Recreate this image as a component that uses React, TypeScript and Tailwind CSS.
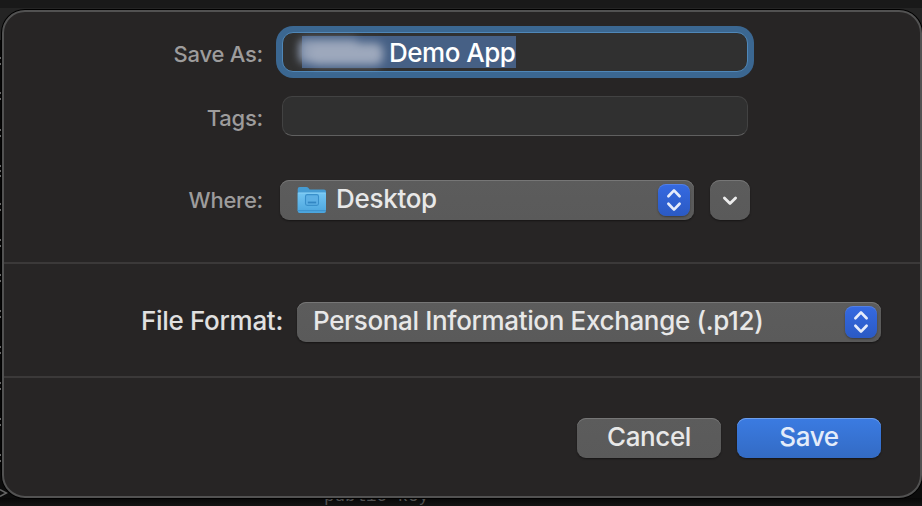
import type { ReactNode } from 'react';

const edgeMarks = [57, 63, 92, 98, 129, 135, 165, 170, 175, 203, 209, 239, 245, 274, 280, 310, 316, 346, 352, 382, 388, 418, 424, 454, 460];

function Stepper() {
  return (
    <span className="flex size-8 items-center justify-center rounded-[8px] bg-linear-to-b from-[#356ae2] to-[#2b5ac3] shadow-[0_1px_2px_rgba(0,0,0,0.35),inset_0_1px_0_rgba(255,255,255,0.15)]">
      <svg width="32" height="32" viewBox="0 0 32 32" fill="none" stroke="#e6ecfa" strokeWidth="2.7" strokeLinecap="round" strokeLinejoin="round">
        <path d="M10.4 12.2 16 6.4l5.6 5.8M10.4 19.8 16 25.6l5.6-5.8" />
      </svg>
    </span>
  );
}

function FolderIcon() {
  return (
    <svg width="30" height="28" viewBox="0 0 30 28" className="-mt-px shrink-0">
      <defs>
        <linearGradient id="front" x1="0" y1="0" x2="0" y2="1">
          <stop offset="0" stopColor="#73c5f2" />
          <stop offset="1" stopColor="#4ba5de" />
        </linearGradient>
      </defs>
      <path d="M.7 3Q.7 1 2.7 1H9.4Q10.6 1 11.5 2L12.6 3.6H27Q29 3.6 29 5.6V25H.7Z" fill="#459bd2" />
      <path d="M.7 6.8H29V24.8Q29 27 27 27H2.7Q.7 27 .7 24.8Z" fill="url(#front)" />
      <path d="M1.2 7H28.5" stroke="#91d4f7" strokeWidth=".8" />
      <path d="M.7 24.7H29" stroke="#3588c1" strokeWidth=".8" />
      <rect x="8.5" y="8.6" width="13" height="10.8" rx="1.8" fill="#5db0e5" stroke="#3990cb" strokeWidth="1.1" />
      <path d="M10.8 16.5H19.2" stroke="#3286c3" strokeWidth="1.8" />
    </svg>
  );
}

function Label({ children, className }: { children: ReactNode; className: string }) {
  return <span className={`whitespace-nowrap text-right ${className}`}>{children}</span>;
}

const grayControl =
  'bg-linear-to-b from-[#5c5c5c] to-[#5a5a5a] shadow-[0_1px_2px_rgba(0,0,0,0.45),inset_0_1px_0_#767676]';

export default function App() {
  return (
    <div className="relative h-[506px] w-[922px] overflow-hidden bg-[#0c0c0c] pt-[10px] pl-[2px] font-['Inter','Liberation_Sans',sans-serif] font-[450]">
      <div className="absolute inset-x-0 top-0 h-2 bg-[#191919]" />
      <div className="absolute inset-x-0 top-2 h-8 bg-[#242424]" />
      <div className="absolute inset-x-0 bottom-0 h-2 bg-linear-to-b from-[#080808] to-[#141414]" />
      <div className="absolute top-[40px] left-0 h-[430px] w-px bg-[#050505]" />
      {edgeMarks.map((y) => (
        <span key={y} className="absolute left-0 h-[2px] w-px bg-[#666]" style={{ top: y }} />
      ))}
      <svg className="absolute top-[487px] left-0" width="8" height="12" viewBox="0 0 8 12" fill="none" stroke="#666" strokeWidth="1.6">
        <path d="M0 2.6 6.4 6 0 9.4" />
      </svg>
      <span className="absolute top-[486px] left-[324px] whitespace-pre font-['Liberation_Mono',monospace] text-[17.5px] leading-[20px] text-[#505050]">public key</span>

      <main className="relative flex h-[488px] w-[920px] flex-col rounded-[23px] border-2 border-[#525252] bg-[#272525] shadow-[0_0_0_1px_#000]">
        <section className="h-[252px] border-b-2 border-[#3b3939] pt-5 text-[#9d9c9c]">
          <div className="flex h-10">
            <Label className="w-[259px] text-[22px] leading-[44px] tracking-[-0.25px]">Save As:</Label>
            <div className="ml-[19px] flex h-10 w-[466px] rounded-[11px] border border-[#4f87b8] bg-[#303030] pt-[3px] pl-[19px] shadow-[0_0_0_6px_#3b6791]">
              <span className="flex h-8 w-[214px] bg-[#466085] text-[26px] leading-[34px] tracking-[-0.5px] text-white">
                <span className="relative -ml-[3px] mt-[3px] h-[27px] w-[84px] blur-[4px]">
                  <span className="absolute top-0 left-0 h-6 w-[60px] rounded-[6px] bg-[#909db4]" />
                  <span className="absolute top-[4px] left-[10px] h-[22px] w-[74px] rounded-[8px] bg-[#9da8bc]" />
                </span>
                <span className="ml-[6px] whitespace-nowrap">Demo App</span>
              </span>
            </div>
          </div>
          <div className="mt-6 flex h-10">
            <Label className="w-[259px] text-[22px] leading-[44px] tracking-[-0.25px]">Tags:</Label>
            <div className="ml-[19px] h-10 w-[466px] rounded-[10px] border border-[#424242] border-b-[#606060] bg-[#303030]" />
          </div>
          <div className="mt-11 flex h-10">
            <Label className="w-[259px] text-[22px] leading-[41px] tracking-[-0.25px]">Where:</Label>
            <div className={`ml-[17px] flex h-10 w-[414px] items-center rounded-[9px] pr-1 pl-[17px] ${grayControl}`}>
              <FolderIcon />
              <span className="ml-[9px] h-10 flex-1 text-[26px] leading-[37px] tracking-[-0.3px] text-[#e8e8e8]">Desktop</span>
              <Stepper />
            </div>
            <div className={`ml-4 flex size-10 items-center justify-center rounded-[10px] ${grayControl}`}>
              <svg width="20" height="20" viewBox="0 0 20 20" fill="none" stroke="#ececec" strokeWidth="2.8" strokeLinecap="round" strokeLinejoin="round">
                <path d="m4.4 7.9 5.6 5.6 5.6-5.6" />
              </svg>
            </div>
          </div>
        </section>

        <section className="flex h-[114px] border-b-2 border-[#3b3939] pt-[38px] text-[26px] text-[#e0e0e0]">
          <Label className="w-[279px] leading-[37px] tracking-[-0.3px]">File Format:</Label>
          <div className={`ml-[14px] flex h-10 w-[584px] items-center rounded-[9px] pr-1 pl-4 ${grayControl}`}>
            <span className="h-10 flex-1 whitespace-nowrap leading-[37px] tracking-[-0.35px] text-[#e8e8e8]">Personal Information Exchange (.p12)</span>
            <Stepper />
          </div>
        </section>

        <section className="flex justify-end gap-4 pt-10 pr-[39px] text-[26px] leading-[37px] tracking-[-0.4px]">
          <button className={`h-10 w-36 rounded-[9px] pb-[3px] text-[#e8e8e8] ${grayControl}`}>Cancel</button>
          <button className="h-10 w-36 rounded-[9px] bg-linear-to-b from-[#3b7be2] to-[#336bc4] pb-[3px] text-[#e4ecfa] shadow-[0_1px_2px_rgba(0,0,0,0.45),inset_0_1px_0_#6e9fec]">Save</button>
        </section>
      </main>
    </div>
  );
}
